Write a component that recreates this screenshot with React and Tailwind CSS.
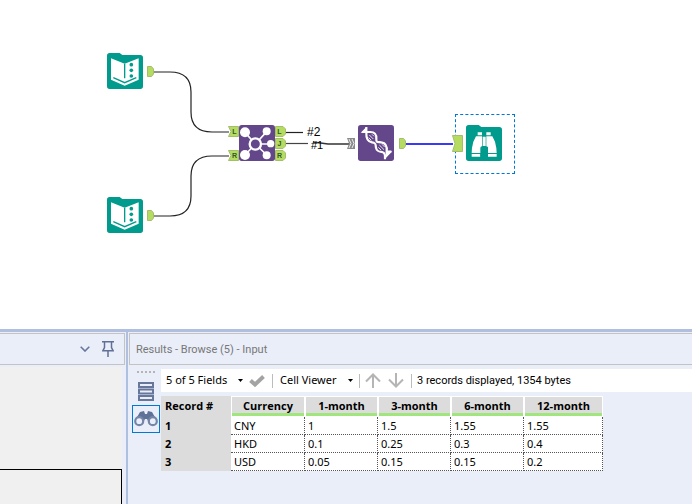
import React, { useState } from 'react';

const columns = ['Currency', '1-month', '3-month', '6-month', '12-month'];

const records = [
  ['CNY', '1', '1.5', '1.55', '1.55'],
  ['HKD', '0.1', '0.25', '0.3', '0.4'],
  ['USD', '0.05', '0.15', '0.15', '0.2'],
];

const InputDataIcon = () => (
  <svg viewBox="0 0 108 108" className="w-9 h-9">
    <path d="M8 0H38L46 6H100Q108 6 108 14V100Q108 108 100 108H8Q0 108 0 100V8Q0 0 8 0Z" fill="#009b8c" />
    <path d="M12 16L53 32L95 16V80L53 98L12 80Z" fill="#fff" />
    <path d="M53 32V76" stroke="#009b8c" strokeWidth="4" />
    <path d="M19 74L53 89L88 74" fill="none" stroke="#009b8c" strokeWidth="4" />
    <circle cx="73" cy="35" r="5.5" fill="#009b8c" />
    <circle cx="73" cy="52" r="5.5" fill="#009b8c" />
    <circle cx="73" cy="69" r="5.5" fill="#009b8c" />
  </svg>
);

const JoinMultipleIcon = () => (
  <svg viewBox="0 0 108 108" className="w-9 h-9">
    <rect width="108" height="108" rx="8" fill="#64478b" />
    <g stroke="#fff" strokeWidth="5">
      <path d="M49 57L18 22M49 57L83 20M49 57H94M49 57L18 90M49 57L83 90" />
    </g>
    <circle cx="49" cy="57" r="17" fill="#64478b" stroke="#fff" strokeWidth="7" />
    <g fill="#fff">
      <circle cx="18" cy="22" r="15" />
      <circle cx="18" cy="90" r="15" />
      <circle cx="83" cy="19" r="12" />
      <circle cx="95" cy="56" r="11" />
      <circle cx="83" cy="91" r="12" />
    </g>
  </svg>
);

const DnaIcon = () => (
  <svg viewBox="0 0 108 108" className="w-9 h-9">
    <rect width="108" height="108" rx="8" fill="#64478b" />
    <g fill="none" stroke="#fff" strokeWidth="6.5">
      <path d="M25 6V22C24 40 28 50 42 52C56 54 52 60 54 68C56 80 64 80 72 81C82 84 81 90 81 103" />
      <path d="M12 21H34C50 20 56 28 55 42C54 54 60 50 70 52C84 54 88 64 86 80H100" />
    </g>
    <path d="M8 23L25 6L25 23ZM81 102L103 79L84 80Z" fill="#fff" />
    <path d="M34 30L46 42M42 28L48 34M32 38L40 46M64 60L78 74M72 58L80 66M61 67L69 75" stroke="#fff" strokeWidth="2.5" />
  </svg>
);

const BrowseIcon = () => (
  <svg viewBox="0 0 108 108" className="w-9 h-9">
    <path d="M8 0H38L46 6H100Q108 6 108 14V100Q108 108 100 108H8Q0 108 0 100V8Q0 0 8 0Z" fill="#009b8c" />
    <g fill="#fff">
      <path d="M35 22H48V31H35ZM61 22H74V31H61Z" />
      <path d="M30 34H48V84H17Q17 68 22 50ZM61 34H79L87 50Q92 68 92 84H66V66H61Z" />
      <path d="M50 35H59V63H50ZM43 64H48V84H43Z" />
      <path d="M17 87H43V95H17ZM66 87H92V95H66Z" />
    </g>
    <path d="M43 95V69Q43 64 48 64H61Q66 64 66 69V95Z" fill="#009b8c" />
  </svg>
);

const OutputAnchor = ({ label }) => (
  <div className="relative w-[11px] h-[11px]">
    <svg viewBox="0 0 11 11" className="w-[11px] h-[11px]">
      <path d="M.5 .5H8L10.5 3V8L8 10.5H.5Z" fill="#b5dc60" stroke="#a3bf6c" />
    </svg>
    <span className="absolute inset-0 pr-0.5 text-center text-[7px] leading-[11px] font-bold text-[#2e5a2c]">{label}</span>
  </div>
);

const InputAnchor = ({ label }) => (
  <div className="relative w-[11px] h-[11px]">
    <svg viewBox="0 0 11 11" className="w-[11px] h-[11px]">
      <path d="M.5 .5H10.5V10.5H.5L3 5.5Z" fill="#b5dc60" stroke="#a3bf6c" />
    </svg>
    <span className="absolute inset-0 pl-0.5 text-center text-[7px] leading-[11px] font-bold text-[#2e5a2c]">{label}</span>
  </div>
);

const SmallAnchor = () => (
  <svg viewBox="0 0 7 11" className="w-[7px] h-[11px]">
    <path d="M.5 .5H4.5L6.5 3V8L4.5 10.5H.5Z" fill="#b5dc60" stroke="#a3bf6c" />
  </svg>
);

// Free canvas: tools and wires sit at their workflow coordinates
const WorkflowCanvas = () => (
  <main className="relative flex-1 min-h-0 overflow-hidden bg-white font-['Liberation_Sans',sans-serif]">
    <svg viewBox="0 0 692 329" className="absolute left-0 top-0 w-[692px] h-[329px]" fill="none">
      <path d="M153 72H170Q191 72 191 92V112Q191 132 212 132H229" stroke="#222" strokeWidth="1.2" />
      <path d="M153 216H170Q191 216 191 196V176Q191 156 212 156H229" stroke="#222" strokeWidth="1.2" />
      <path d="M285 132.500H303" stroke="#222" strokeWidth="1.2" />
      <path d="M285 143.500H308" stroke="#444" strokeWidth="1.2" />
      <path d="M313 142L328 144H350" stroke="#333" strokeWidth="1.5" />
      <path d="M405 144H453" stroke="#3a3af2" strokeWidth="2" />
    </svg>

    <div className="absolute left-[107px] top-[53px]"><InputDataIcon /></div>
    <div className="absolute left-[147px] top-[66px]"><SmallAnchor /></div>
    <div className="absolute left-[107px] top-[197px]"><InputDataIcon /></div>
    <div className="absolute left-[147px] top-[210px]"><SmallAnchor /></div>

    <div className="absolute left-[228px] top-[126px]"><InputAnchor label="L" /></div>
    <div className="absolute left-[228px] top-[150px]"><InputAnchor label="R" /></div>
    <div className="absolute left-[239px] top-[125px]"><JoinMultipleIcon /></div>
    <div className="absolute left-[275px] top-[126px] flex flex-col gap-px">
      <OutputAnchor label="L" />
      <OutputAnchor label="J" />
      <OutputAnchor label="R" />
    </div>
    <span className="absolute left-[307px] top-[126px] text-xs leading-3">#2</span>
    <span className="absolute left-[311px] top-[139px] text-[11px] leading-3">#1</span>

    <svg viewBox="0 0 8 11" className="absolute left-[347px] top-[138px] w-2 h-[11px]">
      <path d="M0 0H8V11H0L2 5.500Z" fill="#8a8a8a" />
      <path d="M2 1L4 5.500L2 10M5 1L7 5.500L5 10" fill="none" stroke="#eee" />
    </svg>
    <div className="absolute left-[358px] top-[125px]"><DnaIcon /></div>
    <div className="absolute left-[399px] top-[138px]"><SmallAnchor /></div>

    <div className="absolute left-[455px] top-[114px] w-[60px] h-[60px] border border-dashed border-[#0078d7]" />
    <svg viewBox="0 0 11 17" className="absolute left-[452px] top-[135px] w-[11px] h-[17px]">
      <path d="M.5 .5H10.500V16.500H.5L3 8.500Z" fill="#b5dc60" stroke="#a3bf6c" />
    </svg>
    <div className="absolute left-[466px] top-[125px]"><BrowseIcon /></div>
  </main>
);

const ConfigPanel = () => (
  <aside className="flex flex-col w-[126px] shrink-0 pt-px pr-px">
    <div className="flex items-center justify-end gap-3 h-8 pr-2.5 border border-l-0 border-[#c3c3c3]">
      <button aria-label="Collapse panel">
        <svg viewBox="0 0 10 6" className="w-2.5 h-1.5" fill="none" stroke="#66779b" strokeWidth="1.6">
          <path d="M.7 .7L5 5L9.300 .7" />
        </svg>
      </button>
      <button aria-label="Pin panel">
        <svg viewBox="0 0 12 16" className="w-3 h-4" fill="none" stroke="#5f7196" strokeWidth="1.5">
          <path d="M0 .8H12M2.500 .8V6.500L.8 9.800H11.200L9.500 6.500V.8M6 10V16" />
        </svg>
      </button>
    </div>
    <div className="flex flex-1 mt-0.5 mr-[3px] pt-[102px] bg-[#f0f0f0]">
      <div className="flex-1 border-t border-r border-black" />
    </div>
  </aside>
);

const ResultsRail = () => (
  <nav className="flex flex-col items-center w-8 shrink-0 pt-1.5 pl-0.5">
    <div className="flex gap-0.5">
      {[0, 1, 2, 3, 4].map((dot) => (
        <span key={dot} className="w-0.5 h-0.5 bg-[#b4b4b4]" />
      ))}
    </div>
    <button aria-label="Messages" className="mt-[9px]">
      <svg viewBox="0 0 16 19" className="w-4 h-[19px]" fill="#eaeef9" stroke="#66779b" strokeWidth="2">
        <path d="M1 1H15V5H1ZM1 7.500H15V11.500H1ZM1 14H15V18H1Z" />
      </svg>
    </button>
    <button aria-label="Browse data" className="flex items-center justify-center w-7 h-7 mt-1 border border-[#0078d7]">
      <svg viewBox="0 0 24 16" className="w-6 h-4">
        <path d="M6 1L10 0L11 3H13L14 0L18 1L22 8L14 10L13 8H11L10 10L2 8Z" fill="#5f7196" />
        <circle cx="5.200" cy="10.200" r="4" fill="#eaeef9" stroke="#7485a8" strokeWidth="2.200" />
        <circle cx="18.800" cy="10.200" r="4" fill="#eaeef9" stroke="#7485a8" strokeWidth="2.200" />
      </svg>
    </button>
  </nav>
);

const Caret = () => (
  <svg viewBox="0 0 5 3" className="w-[5px] h-[3px]">
    <path d="M0 0H5L2.500 3Z" fill="#000" />
  </svg>
);

const Separator = () => <span className="w-px h-3.5 bg-[#bcbcbc]" />;

const ResultsToolbar = () => (
  <div className="flex items-center h-[23px] pl-[5px] bg-white text-[11px] whitespace-nowrap">
    <button className="flex items-center justify-between w-[77px]">5 of 5 Fields <Caret /></button>
    <button aria-label="Apply" className="ml-1.5 mr-[7px]">
      <svg viewBox="0 0 16 12" className="w-4 h-3" fill="none" stroke="#a3a3a3" strokeWidth="4">
        <path d="M1.500 5.500L6 9.500L14.500 1.500" />
      </svg>
    </button>
    <Separator />
    <button className="flex items-center justify-between w-[73px] ml-[7px] mr-1.5">Cell Viewer <Caret /></button>
    <Separator />
    <button aria-label="Previous record" className="ml-[5px]">
      <svg viewBox="0 0 16 15" className="w-4 h-[15px]" fill="none" stroke="#b5b5b5" strokeWidth="2">
        <path d="M8 15V1.500M1 8.500L8 1.500L15 8.500" />
      </svg>
    </button>
    <button aria-label="Next record" className="ml-[7px] mr-[7px]">
      <svg viewBox="0 0 16 15" className="w-4 h-[15px]" fill="none" stroke="#b5b5b5" strokeWidth="2">
        <path d="M8 0V13.500M1 6.500L8 13.500L15 6.500" />
      </svg>
    </button>
    <Separator />
    <span className="ml-[5px] pt-0.5 font-['Roboto',sans-serif]">3 records displayed, 1354 bytes</span>
  </div>
);

const ResultsTable = () => {
  const [selected, setSelected] = useState(null);

  return (
    <table className="mt-1 w-[442px] table-fixed border-separate border-spacing-0 text-[11px] leading-4 text-black">
      <colgroup>
        <col className="w-[70px]" />
        <col className="w-[74px]" />
        <col className="w-[73px]" />
        <col className="w-[73px]" />
        <col className="w-[73px]" />
        <col className="w-[79px]" />
      </colgroup>
      <thead className="font-['Open_Sans',sans-serif] leading-[18px]">
        <tr>
          <th scope="col" className="p-0 pt-px pl-1 text-left align-top bg-[#dcdcdc]">Record #</th>
          {columns.map((name) => (
            <th key={name} scope="col" className="p-0 border border-white bg-[#dcdcdc]">
              <div className="h-[19px] border-b-3 border-[#a0e67d]">{name}</div>
            </th>
          ))}
        </tr>
      </thead>
      <tbody>
        {records.map((row, index) => (
          <tr key={row[0]} onClick={() => setSelected(index)} aria-selected={selected === index}>
            <th scope="row" className="h-[18px] p-0 pl-1 text-left bg-[#dcdcdc]">{index + 1}</th>
            {row.map((value, cell) => (
              <td key={columns[cell]} className="h-[18px] p-0 pl-[3px] bg-white border-r border-b border-dotted border-[#555]">
                {value}
              </td>
            ))}
          </tr>
        ))}
      </tbody>
    </table>
  );
};

const App = () => {
  return (
    <div className="flex flex-col h-screen overflow-hidden text-black font-['Noto_Sans',sans-serif]">
      <WorkflowCanvas />
      <div className="flex h-[175px] shrink-0 border-t-3 border-[#b0bfe0] bg-[#eaeef9]">
        <ConfigPanel />
        <section className="flex flex-col flex-1 min-w-0 border-l-2 border-[#b0bfe0] pt-px pl-px">
          <h2 className="flex items-center h-8 pt-0.5 pl-1.5 border border-r-0 border-[#c3c3c3] font-['Roboto',sans-serif] text-[11px] text-[#777]">
            Results - Browse (5) - Input
          </h2>
          <div className="flex flex-1 min-h-0">
            <ResultsRail />
            <div className="flex-1 min-w-0 pt-1">
              <ResultsToolbar />
              <ResultsTable />
            </div>
          </div>
        </section>
      </div>
    </div>
  );
};

export default App;
